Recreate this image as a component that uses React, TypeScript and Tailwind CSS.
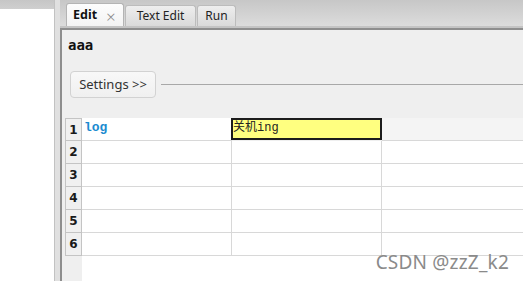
import React from 'react';

const ui = { fontFamily: '"Noto Sans", "Open Sans", sans-serif' };
const mono = { fontFamily: '"Liberation Mono", "Noto Sans CJK SC", monospace' };
const digits = { fontFamily: '"DejaVu Sans", "Noto Sans", sans-serif' };

const rows = [1, 2, 3, 4, 5, 6];

export default function App() {
  return (
    <div className="relative flex w-[523px] h-[281px] overflow-hidden bg-white" style={ui}>
      {/* left dock */}
      <div className="flex flex-col w-[55px] border-r border-[#c2c2c2]">
        <div className="h-[9px] bg-gradient-to-b from-[#c6c6c6] to-[#cfcfcf]" />
        <div className="flex-1 bg-white" />
      </div>
      <div className="w-[5px] bg-[#e0e0e0]" />

      {/* tab widget */}
      <div className="flex flex-col flex-1">
        <div className="flex items-end h-[28px] pl-[6px] gap-[1px] bg-gradient-to-b from-[#c7c7c7] to-[#dcdcdc] border-b-2 border-[#c4c4c4]">
          <div className="flex items-center h-[23px] w-[58px] pl-[6px] rounded-t-[3px] border border-b-0 border-[#b4b4b4] bg-gradient-to-b from-[#fdfdfd] to-[#f3f3f3]">
            <span className="text-[12.5px] font-bold text-[#111]">Edit</span>
            <span className="ml-[9px] mt-[3px] text-[17px] font-light text-[#8a8a8a] leading-none">×</span>
          </div>
          <div className="flex items-center justify-center h-[21px] w-[71px] rounded-t-[3px] border border-b-0 border-[#bcbcbc] bg-gradient-to-b from-[#eeeeee] to-[#dadada] text-[12px] text-[#222]">
            Text Edit
          </div>
          <div className="flex items-center justify-center h-[21px] w-[39px] rounded-t-[3px] border border-b-0 border-[#bcbcbc] bg-gradient-to-b from-[#eeeeee] to-[#dadada] text-[12px] text-[#222]">
            Run
          </div>
        </div>

        <div className="flex flex-col flex-1 bg-[#efefef] border-l-2 border-t-2 border-[#8e8e8e]">
          <div className="pl-[6px] pt-[7px] h-[22px] text-[14px] font-bold leading-[16px] text-[#111]" style={{ fontFamily: '"DejaVu Sans Mono", monospace' }}>
            aaa
          </div>

          <div className="flex items-center mt-[19px] pl-[8px]">
            <button
              type="button"
              className="h-[27px] w-[86px] rounded-[4px] border border-[#d2d2d2] bg-gradient-to-b from-[#f8f8f8] to-[#f0f0f0] text-[13px] text-[#333]"
            >
              Settings &gt;&gt;
            </button>
            <div className="flex-1 h-px ml-[5px] bg-[#a8a8a8]" />
          </div>

          {/* grid */}
          <div className="flex flex-col flex-1 mt-[20px]">
            {rows.map((n) => (
              <div key={n} className="flex h-[23px]">
                <div className="w-[3px]" />
                <div
                  className={`flex items-center justify-center w-[17px] border-x border-b border-[#c4c4c4] bg-[#f0f0f0] text-[12px] font-bold text-[#1a1a1a] ${n === 1 ? 'border-t' : ''}`}
                  style={digits}
                >
                  {n}
                </div>
                <div
                  className="w-[150px] border-r border-b border-[#d8d8d8] bg-white pl-[2px] pt-[2px] text-[13px] font-bold leading-[15px] text-[#1b8bd0]"
                  style={mono}
                >
                  {n === 1 ? 'log' : ''}
                </div>
                {n === 1 ? (
                  <div
                    className="w-[151px] -ml-px h-[22px] border-2 border-[#1c1c1c] bg-[#ffff80] pt-[1px] text-[12px] leading-[14px] text-[#222]"
                    style={mono}
                  >
                    关机ing
                  </div>
                ) : (
                  <div className="w-[150px] border-r border-b border-[#d8d8d8] bg-white" />
                )}
                <div className={`flex-1 border-b border-[#d8d8d8] ${n === 1 ? 'bg-[#f4f4f4]' : 'bg-white'}`} />
              </div>
            ))}
            <div className="flex flex-1">
              <div className="w-[20px] bg-[#efefef]" />
              <div className="flex-1 bg-white" />
            </div>
          </div>
        </div>
      </div>

      {/* watermark */}
      <div
        className="absolute right-[14px] bottom-[9px] text-[19px] leading-[20px] tracking-[0.2px] text-[#8a8a8a]"
        style={{ fontFamily: '"Noto Sans", sans-serif' }}
      >
        CSDN @zzZ_k2
      </div>
    </div>
  );
}
